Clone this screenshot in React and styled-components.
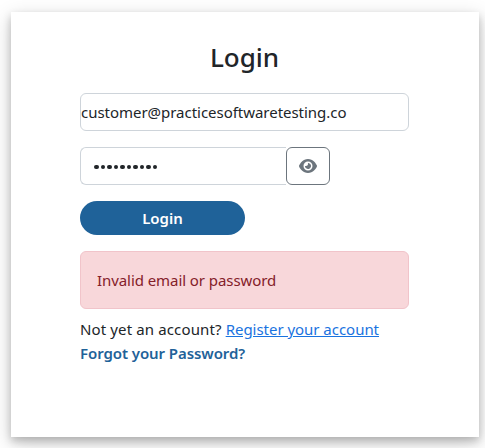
import React from "react";
import styled, { createGlobalStyle } from "styled-components";
import { FaEye } from "react-icons/fa6";

const GlobalStyle = createGlobalStyle`
  *, *::before, *::after { box-sizing: border-box; }
  html, body { margin: 0; background: #fff; }
  body {
    overflow: hidden;
    color: #212529;
    font: 400 15px/24px "Noto Sans", sans-serif;
  }
`;

const Page = styled.main`
  height: 448px;
  padding: 12px 6px 11px 11px;
`;

const Card = styled.section`
  width: 468px;
  height: 425px;
  padding: 28px 70px 0 69px;
  background: #fff;
  box-shadow: 0 4px 8px rgba(0, 0, 0, 0.2), 0 6px 20px rgba(0, 0, 0, 0.19);
`;

const Title = styled.h3`
  margin: 0 0 8px;
  height: 33px;
  font-size: 26px;
  font-weight: 500;
  line-height: 34px;
  text-align: center;
`;

const Form = styled.form`
  display: flex;
  flex-direction: column;
  align-items: flex-start;
  gap: 16px;
  padding-top: 12px;
`;

const EmailInput = styled.input`
  width: 329px;
  height: 38px;
  padding: 0;
  border: 1px solid #ced4da;
  border-radius: 6px;
  background: #fff;
  color: #212529;
  font: inherit;
  letter-spacing: -0.03px;
  outline: none;
`;

const PasswordGroup = styled.div`
  display: flex;
  width: 250px;
  height: 38px;
`;

const PasswordField = styled.div`
  display: flex;
  flex: 1;
  align-items: center;
  gap: 2px;
  padding: 2px 13px 0;
  border: 1px solid #ced4da;
  border-right: 0;
  border-radius: 6px 0 0 6px;
`;

const Dot = styled.span`
  width: 4.5px;
  height: 4.5px;
  border-radius: 50%;
  background: #212529;
`;

const RevealButton = styled.button`
  display: grid;
  place-items: center;
  width: 44px;
  padding: 0;
  border: 1px solid #6c757d;
  border-radius: 6px;
  background: #fff;
  color: #6c757d;
`;

const EyeIcon = styled(FaEye)`
  width: 18px;
  height: 16px;
`;

const SubmitButton = styled.button`
  width: 165px;
  height: 34px;
  padding: 0 0 1px;
  border: 0;
  border-radius: 17px;
  background: #1f6299;
  color: #fff;
  font: inherit;
  font-weight: 600;
`;

const Alert = styled.div`
  width: 329px;
  height: 58px;
  padding: 16px;
  border: 1px solid #f1c4ca;
  border-radius: 6px;
  background: #f8d7da;
  color: #842029;
  letter-spacing: -0.07px;
`;

const AccountLine = styled.p`
  margin: 8px 0 0;
  letter-spacing: 0.13px;
  white-space: nowrap;
`;

const RegisterLink = styled.a`
  color: #1a73e0;
  letter-spacing: -0.03px;
  text-decoration: underline;
`;

const ForgotLink = styled.a`
  display: block;
  color: #1f6299;
  font-weight: 600;
  letter-spacing: -0.08px;
  text-decoration: none;
  white-space: nowrap;
`;

export default function App() {
  return (
    <Page>
      <GlobalStyle />
      <Card>
        <Title>Login</Title>
        <Form onSubmit={(event) => event.preventDefault()}>
          <EmailInput defaultValue="customer@practicesoftwaretesting.co" aria-label="Email" />
          <PasswordGroup>
            <PasswordField>
              {Array.from({ length: 10 }, (_, i) => <Dot key={i} />)}
            </PasswordField>
            <RevealButton type="button" aria-label="Show password">
              <EyeIcon />
            </RevealButton>
          </PasswordGroup>
          <SubmitButton type="submit">Login</SubmitButton>
          <Alert>Invalid email or password</Alert>
        </Form>
        <AccountLine>
          Not yet an account? <RegisterLink href="#register">Register your account</RegisterLink>
        </AccountLine>
        <ForgotLink href="#forgot">Forgot your Password?</ForgotLink>
      </Card>
    </Page>
  );
}
